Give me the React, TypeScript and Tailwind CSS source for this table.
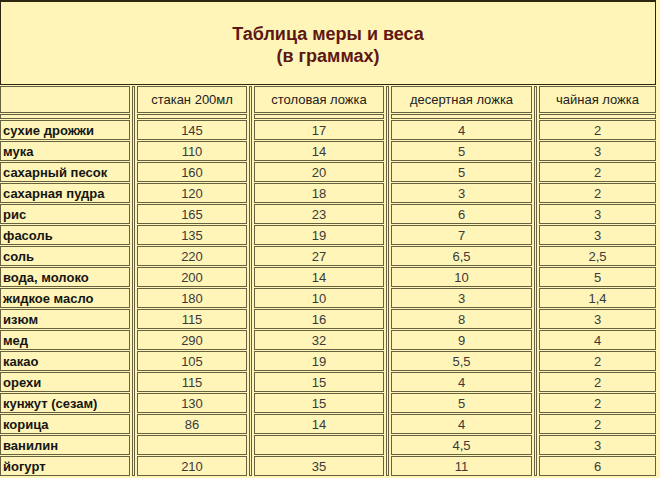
import { Fragment } from "react"

const rows: [string, string, string, string, string][] = [
  ["сухие дрожжи", "145", "17", "4", "2"],
  ["мука", "110", "14", "5", "3"],
  ["сахарный песок", "160", "20", "5", "2"],
  ["сахарная пудра", "120", "18", "3", "2"],
  ["рис", "165", "23", "6", "3"],
  ["фасоль", "135", "19", "7", "3"],
  ["соль", "220", "27", "6,5", "2,5"],
  ["вода, молоко", "200", "14", "10", "5"],
  ["жидкое масло", "180", "10", "3", "1,4"],
  ["изюм", "115", "16", "8", "3"],
  ["мед", "290", "32", "9", "4"],
  ["какао", "105", "19", "5,5", "2"],
  ["орехи", "115", "15", "4", "2"],
  ["кунжут (сезам)", "130", "15", "5", "2"],
  ["корица", "86", "14", "4", "2"],
  ["ванилин", "", "", "4,5", "3"],
  ["йогурт", "210", "35", "11", "6"],
]

const headers = ["стакан 200мл", "столовая ложка", "десертная ложка", "чайная ложка"]

const cell = "border border-[#66613f] bg-[#fff5b8]"

export default function App() {
  return (
    <div className="w-[660px] h-[478px] overflow-hidden bg-[#fff5b8] font-['Liberation_Sans',Arial,sans-serif]">
      <div className="grid grid-cols-[130px_3px_110px_3px_130px_3px_141px_3px_117px] grid-rows-[85px_27px_5px_repeat(17,20px)] gap-x-[2px] gap-y-[1px] w-[656px]">
        {/* spacer columns between the data columns */}
        <div className={`${cell} col-start-2 row-start-2 row-span-19`} />
        <div className={`${cell} col-start-4 row-start-2 row-span-19`} />
        <div className={`${cell} col-start-6 row-start-2 row-span-19`} />
        <div className={`${cell} col-start-8 row-start-2 row-span-19`} />

        <div className="col-span-9 border border-[#2d2611] border-t-2 bg-[#fff5b8] flex flex-col items-center justify-center pt-[3px] text-[18px] leading-[22px] font-bold text-[#5e1712]">
          <span>Таблица меры и веса</span>
          <span>(в граммах)</span>
        </div>

        <div className={cell} />
        {headers.map((h) => (
          <div key={h} className={`${cell} flex items-center justify-center text-[13px] text-[#222]`}>
            {h}
          </div>
        ))}

        {[0, 1, 2, 3, 4].map((i) => (
          <div key={i} className={cell} />
        ))}

        {rows.map((r) => (
          <Fragment key={r[0]}>
            <div className={`${cell} flex items-center pl-[2px] text-[13px] font-bold text-[#151515] leading-none`}>
              {r[0]}
            </div>
            {r.slice(1).map((v, j) => (
              <div key={j} className={`${cell} flex items-center justify-center text-[13px] text-[#3a3a3a] leading-none`}>
                {v}
              </div>
            ))}
          </Fragment>
        ))}
      </div>
    </div>
  )
}
